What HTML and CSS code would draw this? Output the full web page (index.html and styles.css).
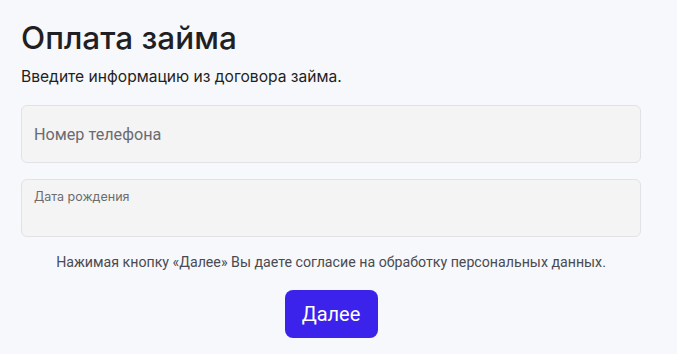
FILE: index.html
```html
<!DOCTYPE html>
<html lang="ru">
<head>
<meta charset="utf-8">
<link rel="stylesheet" href="styles.css">
</head>
<body>
<main class="page">
  <h1 class="title">Оплата займа</h1>
  <p class="subtitle">Введите информацию из договора займа.</p>
  <form class="form">
    <label class="field field-phone">
      <span class="placeholder">Номер телефона</span>
    </label>
    <label class="field field-date">
      <span class="label-small">Дата рождения</span>
    </label>
    <p class="consent">Нажимая кнопку «Далее» Вы даете согласие на обработку персональных данных.</p>
    <div class="actions">
      <button type="button" class="btn">Далее</button>
    </div>
  </form>
</main>
</body>
</html>
```
FILE: styles.css
```css
html, body {
  margin: 0;
  padding: 0;
  background: #f7f8fb;
}
.page {
  padding: 18px 36px 0 21px;
  font-family: Inter, "Noto Sans", sans-serif;
  color: #1f1f24;
}
.title {
  margin: 0;
  font-size: 31.5px;
  font-weight: 500;
  line-height: 40px;
  letter-spacing: 0;
}
.subtitle {
  margin: 9px 0 0;
  font-size: 15.6px;
  line-height: 20px;
}
.form {
  margin-top: 18px;
  display: flex;
  flex-direction: column;
  gap: 16px;
}
.field {
  display: flex;
  box-sizing: border-box;
  height: 58px;
  background: #f4f4f4;
  border: 1px solid #e2e2e6;
  border-radius: 6px;
  padding: 0 12px;
  font-family: Roboto, sans-serif;
  color: #6b6b70;
}
.field-phone {
  align-items: center;
}
.placeholder {
  font-size: 16.2px;
}
.field-date {
  align-items: flex-start;
  padding-top: 8px;
}
.label-small {
  font-family: Inter, sans-serif;
  font-size: 12.5px;
  line-height: 18px;
}
.consent {
  margin: 0;
  text-align: center;
  font-family: Roboto, sans-serif;
  font-size: 14.2px;
  line-height: 18px;
  color: #4a4a50;
}
.actions {
  display: flex;
  justify-content: center;
  margin-top: 3px;
}
.btn {
  width: 93px;
  height: 48px;
  border: none;
  border-radius: 8px;
  background: #3c23ec;
  color: #fff;
  font-family: Roboto, sans-serif;
  font-size: 20px;
}
```
